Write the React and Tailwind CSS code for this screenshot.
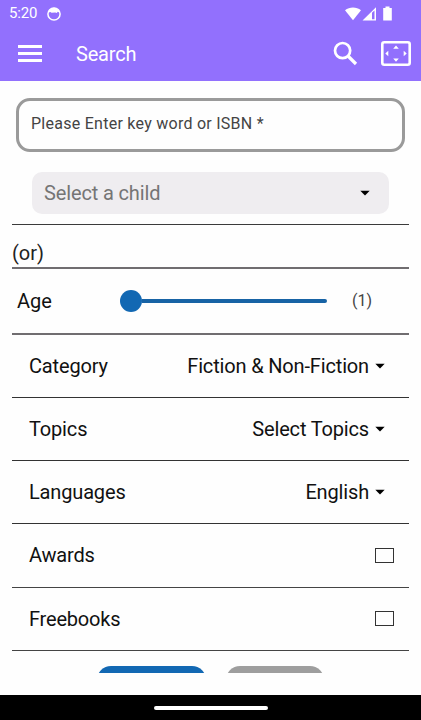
import { useState } from 'react'

const filters = [
  { label: 'Category', value: 'Fiction & Non-Fiction', className: 'h-[63px]' },
  { label: 'Topics', value: 'Select Topics', className: 'h-[63px]' },
  { label: 'Languages', value: 'English', className: 'h-[63px]' },
]

function Caret() {
  return (
    <svg width="10" height="6" viewBox="0 0 10 6" className="flex-shrink-0">
      <path d="M0.3 0.7h9.400L5 5.600z" fill="#000" />
    </svg>
  )
}

function StatusBar() {
  return (
    <div className="h-[27px] flex items-center justify-between pl-[9px] pr-[28px]">
      <div className="flex items-center gap-[10px]">
        <span className="text-[15px] leading-none tracking-[-0.2px]">5:20</span>
        <svg width="14" height="14" viewBox="0 0 14 14">
          <circle cx="7" cy="7" r="6.100" fill="none" stroke="#fff" strokeWidth="1.500" />
          <path d="M1.500 5.600C1.800 2.600 4.200.800 7 .800s5.200 1.800 5.500 4.800L10.500 4.700 10 6 8.200 5.400 4.500 5.800 3.500 5z" fill="#fff" />
        </svg>
      </div>
      <svg width="48" height="16" viewBox="0 0 48 16" fill="#fff">
        <path d="M0 4.200C4.600.700 11.400.700 16 4.200L8 14.200z" />
        <path fillRule="evenodd" d="M17.500 14.500L31 1.200v13.300zM27 6.800v6.500h2.500V4.500z" />
        <path d="M40.500 .500h4v1.500h2.300v12.500h-8.600v-12.500h2.300z" />
      </svg>
    </div>
  )
}

function Header() {
  return (
    <header className="h-[81px] flex-shrink-0 bg-[#9270fd] text-white">
      <StatusBar />
      <div className="h-[52px] flex items-center pl-[18px] pr-[10px]">
        <button className="w-6 flex flex-col gap-1" aria-label="Menu">
          <span className="h-[3px] w-full bg-white" />
          <span className="h-[3px] w-full bg-white" />
          <span className="h-[3px] w-full bg-white" />
        </button>
        <h1 className="ml-[34px] pt-[2px] text-[20px] tracking-[-0.2px]">Search</h1>
        <svg width="25" height="25" viewBox="0 0 25 25" className="ml-auto" fill="none" stroke="#fff">
          <circle cx="9.600" cy="9.600" r="7.600" strokeWidth="2.700" />
          <path d="M15 15l8 8" strokeWidth="3.200" />
        </svg>
        <svg width="30" height="25" viewBox="0 0 30 25" className="ml-[23px]">
          <rect x="1.300" y="1.300" width="27.400" height="22.400" rx="2" fill="none" stroke="#fff" strokeWidth="2.600" />
          <path d="M15 4.500l2.800 3.200h-5.600zM15 20.700l2.800-3.200h-5.600zM4.300 12.500l3-2.700v5.400zM25.700 12.500l-3-2.700v5.400z" fill="#fff" />
        </svg>
      </div>
    </header>
  )
}

export default function App() {
  const [keyword, setKeyword] = useState('')
  const [checked, setChecked] = useState({})

  const toggle = (name) => setChecked({ ...checked, [name]: !checked[name] })

  return (
    <div className="w-full h-[720px] flex flex-col overflow-hidden bg-[#fefefe] text-[#111] font-['Roboto','Noto_Sans',sans-serif]">
      <Header />

      <main className="h-[592px] flex-shrink-0 overflow-hidden px-3">
        {/* Keyword */}
        <div className="mt-[17px] ml-1 mr-1 h-[54px] border-[3px] border-[#9a9a9a] rounded-[14px] px-[12px] flex items-center">
          <input
            value={keyword}
            onChange={(e) => setKeyword(e.target.value)}
            placeholder="Please Enter key word or ISBN *"
            className="w-full h-6 pb-[3px] text-[16px] tracking-[0.26px] outline-none placeholder:text-[#444]"
          />
        </div>

        {/* Child */}
        <div className="mt-5 ml-[20px] mr-[20px] h-[42px] rounded-[10px] bg-[#efedf0] pl-3 pr-[19px] flex items-center justify-between">
          <span className="text-[20px] tracking-[-0.14px] text-[#757575]">Select a child</span>
          <Caret />
        </div>

        <div className="mt-[10px] h-px bg-[#3b3b3b]" />
        <div className="h-[42px] pt-[13px] text-[20px] leading-[30px] text-[#222]">(or)</div>
        <div className="h-[2px] bg-[#706d70]" />

        {/* Age */}
        <div className="h-[64px] flex items-center pl-[5px]">
          <span className="w-[103px] text-[20px]">Age</span>
          <div className="w-[207px] flex items-center">
            <span className="size-[22px] rounded-full bg-[#1268b3]" />
            <span className="flex-1 h-1 rounded-r-full bg-[#1763a5]" />
          </div>
          <span className="ml-[25px] text-[16px] text-[#444]">(1)</span>
        </div>
        <div className="h-[2px] bg-[#706d70]" />

        {filters.map((filter) => (
          <div
            key={filter.label}
            className={`${filter.className} pb-px border-b border-[#333] flex items-center justify-between pl-[17px] pr-[24px] text-[20px] tracking-[-0.16px]`}
          >
            <span>{filter.label}</span>
            <div className="flex items-center gap-[6px]">
              <span>{filter.value}</span>
              <Caret />
            </div>
          </div>
        ))}

        {['Awards', 'Freebooks'].map((name) => (
          <div
            key={name}
            className="h-[63.500px] border-b border-[#444] flex items-center justify-between pl-[17px] pr-[15px] text-[20px] tracking-[-0.2px]"
          >
            <span>{name}</span>
            <button
              onClick={() => toggle(name)}
              aria-label={name}
              className={`w-[19px] h-[15px] border border-[#333] ${checked[name] ? 'bg-[#1268b3]' : ''}`}
            />
          </div>
        ))}

        <div className="mt-[15px] flex pl-[85px] gap-[20px]">
          <button className="w-[109px] h-10 rounded-[14px] bg-[#1268b3]" aria-label="Search" />
          <button className="w-[98px] h-10 rounded-[14px] bg-[#9e9e9e]" aria-label="Reset" />
        </div>
      </main>

      {/* Gesture bar */}
      <footer className="mt-auto h-[25px] flex-shrink-0 bg-black flex items-center justify-center">
        <span className="w-[114px] h-1 rounded-full bg-white" />
      </footer>
    </div>
  )
}
